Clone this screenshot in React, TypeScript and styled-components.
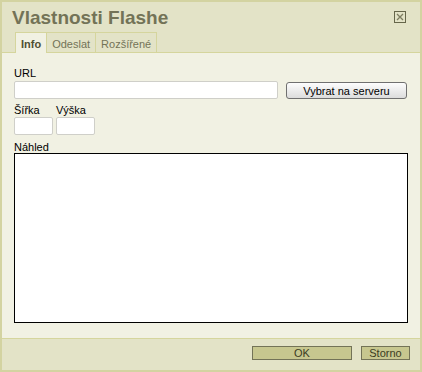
import React from "react";
import styled, { createGlobalStyle } from "styled-components";

const Global = createGlobalStyle`
  html, body { margin: 0; padding: 0; background: #ffffff; }
  body { font-family: "Liberation Sans", Arial, sans-serif; }
  * { box-sizing: border-box; }
`;

const Dialog = styled.div`
  width: 422px;
  height: 372px;
  border: 2px solid #d3d3a1;
  display: flex;
  flex-direction: column;
  background: #e3e3c7;
`;

const Header = styled.div`
  height: 50px;
  padding: 5px 10px 0 10px;
  background: #e3e3c7;
  display: flex;
  flex-direction: column;
`;

const TitleRow = styled.div`
  display: flex;
  justify-content: space-between;
  align-items: flex-start;
  height: 22px;
`;

const Title = styled.div`
  font-size: 19px;
  line-height: 22px;
  font-weight: bold;
  color: #737357;
  white-space: nowrap;
`;

const Close = styled.button`
  width: 12px;
  height: 12px;
  margin: 4px 4px 0 0;
  padding: 0;
  border: 0;
  background: transparent;
  display: block;
  svg { display: block; }
`;

const TabRow = styled.div`
  display: flex;
  align-items: flex-start;
  margin-top: 3px;
  padding-left: 3px;
  height: 20px;
`;

const Tab = styled.div<{ $active?: boolean }>`
  position: relative;
  z-index: ${(p) => (p.$active ? 1 : 0)};
  height: ${(p) => (p.$active ? 21 : 20)}px;
  padding: 4px 5px 0 5px;
  margin-left: -1px;
  &:first-child { margin-left: 0; }
  border: 1px solid #d5d59d;
  border-bottom: none;
  background: ${(p) => (p.$active ? "#f1f1e3" : "#e3e3c7")};
  color: ${(p) => (p.$active ? "#4f4f33" : "#737357")};
  font-weight: ${(p) => (p.$active ? "bold" : "normal")};
  font-size: 11px;
  line-height: 14px;
  white-space: nowrap;
`;

const Content = styled.div`
  height: 286px;
  border-top: 1px solid #d5d59d;
  background: #f1f1e3;
  padding: 13px 12px 0 12px;
  display: flex;
  flex-direction: column;
`;

const Label = styled.div<{ $lh?: number }>`
  font-size: 11px;
  line-height: ${(p) => p.$lh ?? 14}px;
  color: #000;
  white-space: nowrap;
`;

const UrlRow = styled.div`
  display: flex;
  align-items: flex-start;
  gap: 8px;
  margin-top: 1px;
`;

const TextInput = styled.input<{ $w: number }>`
  width: ${(p) => p.$w}px;
  height: 18px;
  border: 1px solid #cfcfc9;
  border-radius: 2px;
  background: #ffffff;
  margin: 0;
  padding: 1px 3px;
  font-family: "Liberation Sans", Arial, sans-serif;
  font-size: 11px;
  outline: none;
`;

const BrowseButton = styled.button`
  width: 121px;
  height: 17px;
  margin-top: 1px;
  padding: 0;
  border: 1px solid #707070;
  border-radius: 3px;
  background: linear-gradient(#fdfdfd 0%, #eeeeee 45%, #dcdcdc 100%);
  font-family: "Liberation Sans", Arial, sans-serif;
  font-size: 11px;
  line-height: 14px;
  color: #000;
`;

const SizeRow = styled.div`
  display: flex;
  gap: 3px;
  margin-top: 4px;
`;

const SizeField = styled.div`
  display: flex;
  flex-direction: column;
  width: 39px;
`;

const PreviewLabel = styled(Label)`
  margin-top: 6px;
`;

const Preview = styled.div`
  height: 170px;
  border: 1px solid #000000;
  background: #ffffff;
`;

const Footer = styled.div`
  height: 32px;
  border-top: 1px solid #d5d59d;
  background: #e3e3c7;
  padding: 7px 10px 0 10px;
  display: flex;
  justify-content: flex-end;
  align-items: flex-start;
  gap: 9px;
`;

const FooterButton = styled.button<{ $w: number }>`
  width: ${(p) => p.$w}px;
  height: 14px;
  padding: 0;
  border: 1px solid #737357;
  background: #c7c78f;
  color: #3b3b1f;
  font-family: "Liberation Sans", Arial, sans-serif;
  font-size: 11px;
  line-height: 12px;
`;

export default function App() {
  return (
    <>
      <Global />
      <Dialog>
        <Header>
          <TitleRow>
            <Title>Vlastnosti Flashe</Title>
            <Close aria-label="Zavřít">
              <svg width="12" height="12" viewBox="0 0 12 12">
                <rect x="0.5" y="0.5" width="11" height="11" fill="#e3e3c7" stroke="#66664a" />
                <path d="M3 3 L9 9 M9 3 L3 9" stroke="#7d7d60" strokeWidth="1.3" />
              </svg>
            </Close>
          </TitleRow>
          <TabRow>
            <Tab $active>Info</Tab>
            <Tab>Odeslat</Tab>
            <Tab>Rozšířené</Tab>
          </TabRow>
        </Header>
        <Content>
          <Label>URL</Label>
          <UrlRow>
            <TextInput $w={264} />
            <BrowseButton>Vybrat na serveru</BrowseButton>
          </UrlRow>
          <SizeRow>
            <SizeField>
              <Label>Šířka</Label>
              <TextInput $w={39} />
            </SizeField>
            <SizeField>
              <Label>Výška</Label>
              <TextInput $w={39} />
            </SizeField>
          </SizeRow>
          <PreviewLabel $lh={12}>Náhled</PreviewLabel>
          <Preview />
        </Content>
        <Footer>
          <FooterButton $w={100}>OK</FooterButton>
          <FooterButton $w={49}>Storno</FooterButton>
        </Footer>
      </Dialog>
    </>
  );
}
